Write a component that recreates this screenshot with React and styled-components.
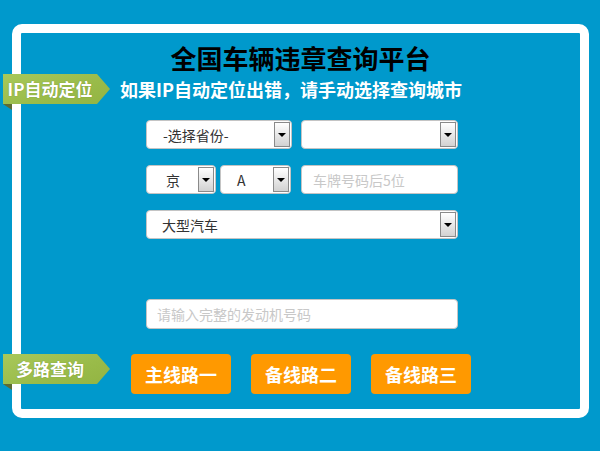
import React from "react";
import styled, { createGlobalStyle } from "styled-components";

const GlobalStyle = createGlobalStyle`
  body {
    margin: 0;
    background-color: #0099cc;
    font-family: "Noto Sans CJK SC", "Liberation Sans", sans-serif;
  }
`;

const Frame = styled.div`
  box-sizing: border-box;
  width: 577px;
  height: 394px;
  margin: 24px 0 0 12px;
  padding-top: 10px;
  border: 9px solid #fff;
  border-radius: 10px;
`;

const Title = styled.h1`
  margin: 0;
  text-align: center;
  font-size: 26px;
  line-height: 30px;
  font-weight: 700;
  color: #000;
`;

const NoticeRow = styled.div`
  display: flex;
  align-items: center;
  margin-top: 1px;
`;

const Ribbon = styled.div`
  position: relative;
  flex: none;
  width: 107px;
  height: 30px;
  margin-left: -18px;
  &::after {
    content: "";
    position: absolute;
    left: 0;
    top: 30px;
    border-top: 6px solid #5d6b34;
    border-left: 9px solid transparent;
  }
`;

const RibbonLabel = styled.div`
  box-sizing: border-box;
  height: 100%;
  padding-right: 13px;
  background: linear-gradient(160deg, #a8c85a 0%, #99bb49 60%, #93b443 100%);
  clip-path: polygon(0 0, calc(100% - 13px) 0, 100% 50%, calc(100% - 13px) 100%, 0 100%);
  color: #fff;
  font-size: 17px;
  font-weight: 700;
  line-height: 30px;
  text-align: center;
  white-space: nowrap;
  text-shadow: 0 0 1px rgba(80, 100, 30, 0.6);
`;

const Notice = styled.p`
  margin: 0 0 0 10px;
  color: #fff;
  font-size: 18px;
  font-weight: 700;
  white-space: nowrap;
  line-height: 30px;
`;

const Form = styled.div`
  width: 312px;
  margin: 16px 0 0 125px;
`;

const Row = styled.div`
  display: flex;
  gap: ${(p) => p.$gap || 9}px;
  margin-bottom: ${(p) => p.$after ?? 16}px;
`;

const SelectBox = styled.div`
  box-sizing: border-box;
  display: flex;
  align-items: stretch;
  width: ${(p) => p.$width}px;
  height: ${(p) => p.$height || 29}px;
  padding: 1px;
  background: #fff;
  border: 1px solid #c4c4c4;
  border-radius: 4px;
  font-size: 14px;
  color: #333;
`;

const SelectText = styled.span`
  flex: 1;
  display: flex;
  align-items: center;
  padding-left: ${(p) => p.$indent || 14}px;
  white-space: nowrap;
`;

const ArrowButton = styled.span`
  flex: none;
  display: flex;
  align-items: center;
  justify-content: center;
  box-sizing: border-box;
  width: 16px;
  border: 1px solid #8a8a8a;
  background: linear-gradient(#ffffff, #d2d2d2);
  &::after {
    content: "";
    border-top: 4px solid #000;
    border-left: 4px solid transparent;
    border-right: 4px solid transparent;
  }
`;

const TextInput = styled.input`
  box-sizing: border-box;
  width: ${(p) => p.$width}px;
  height: ${(p) => p.$height || 29}px;
  margin: 0 0 0 ${(p) => p.$offset || 0}px;
  padding: 0 0 0 ${(p) => p.$indent || 11}px;
  border: 1px solid #c4c4c4;
  border-radius: 4px;
  background: #fff;
  font-family: inherit;
  font-size: 14px;
  outline: none;
  &::placeholder {
    color: #c8c8c8;
  }
`;

const LineRow = styled.div`
  display: flex;
  align-items: flex-start;
  margin-top: 25px;
`;

const Buttons = styled.div`
  display: flex;
  gap: 20px;
  margin-left: 21px;
`;

const LineButton = styled.button`
  width: 100px;
  height: 40px;
  padding: 0;
  border: none;
  border-radius: 4px;
  background-color: #ff9900;
  color: #fff;
  font-family: inherit;
  font-size: 18px;
  font-weight: 700;
  cursor: pointer;
`;

function Select({ width, indent, children }) {
  return (
    <SelectBox $width={width}>
      <SelectText $indent={indent}>{children}</SelectText>
      <ArrowButton />
    </SelectBox>
  );
}

function App() {
  return (
    <>
      <GlobalStyle />
      <Frame>
        <Title>全国车辆违章查询平台</Title>
        <NoticeRow>
          <Ribbon>
            <RibbonLabel>IP自动定位</RibbonLabel>
          </Ribbon>
          <Notice>如果IP自动定位出错，请手动选择查询城市</Notice>
        </NoticeRow>

        <Form>
          <Row>
            <Select width={146} indent={15}>-选择省份-</Select>
            <Select width={157} />
          </Row>
          <Row $gap={4}>
            <Select width={71} indent={18}>京</Select>
            <Select width={72} indent={15}>A</Select>
            <TextInput $width={157} $offset={6} placeholder="车牌号码后5位" />
          </Row>
          <Row $after={60}>
            <Select width={312} indent={14}>大型汽车</Select>
          </Row>
          <TextInput $width={312} $height={30} $indent={10} placeholder="请输入完整的发动机号码" />
        </Form>

        <LineRow>
          <Ribbon>
            <RibbonLabel>多路查询</RibbonLabel>
          </Ribbon>
          <Buttons>
            <LineButton>主线路一</LineButton>
            <LineButton>备线路二</LineButton>
            <LineButton>备线路三</LineButton>
          </Buttons>
        </LineRow>
      </Frame>
    </>
  );
}

export default App;
